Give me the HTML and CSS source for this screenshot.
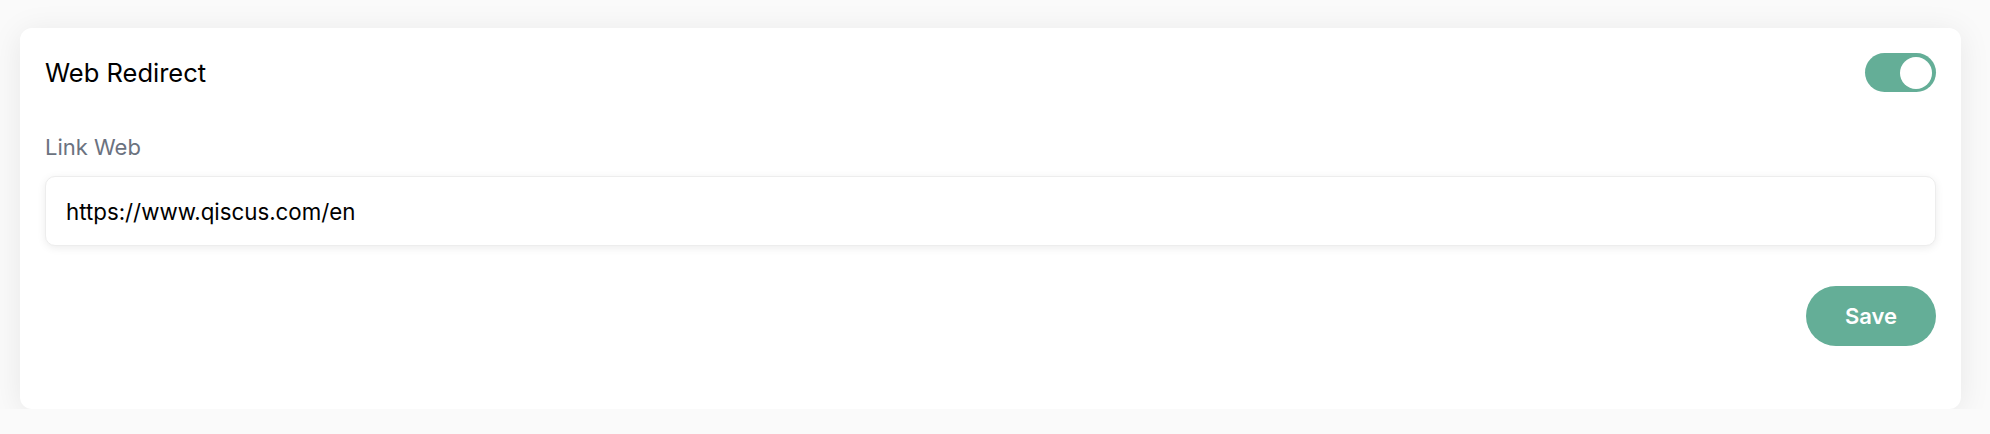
FILE: index.html
```html
<!DOCTYPE html>
<html lang="en">
<head>
  <meta charset="UTF-8">
  <meta name="viewport" content="width=device-width, initial-scale=1.0">
  <title>Web Redirect</title>
  <link rel="stylesheet" href="styles.css">
</head>
<body>
  <div class="card">
    <!-- Header with toggle -->
    <div class="card-header">
      <h2 class="card-title">Web Redirect</h2>
      <label class="switch">
        <input type="checkbox" checked>
        <span class="slider"></span>
      </label>
    </div>

    <!-- Link field -->
    <label class="field-label" for="linkWeb">Link Web</label>
    <input class="field-input" type="text" id="linkWeb" value="https://www.qiscus.com/en">

    <div class="actions">
      <button type="button" class="save-btn">Save</button>
    </div>
  </div>
</body>
</html>
```

FILE: styles.css
```css
body {
  margin: 0;
  padding: 28px 29px 0 20px;
  font-family: Inter, "Noto Sans", sans-serif;
  background-color: #fafafa;
  color: #000;
}

.card {
  background: #fff;
  border-radius: 12px;
  padding: 25px 25px 63px 25px;
  height: 381px;
  box-sizing: border-box;
  box-shadow: 0 4px 32px rgba(0, 0, 0, 0.08);
}

.card-header {
  display: flex;
  justify-content: space-between;
  align-items: center;
  height: 39px;
}

.card-title {
  margin: 0;
  font-size: 25.5px;
  font-weight: 400;
}

/* toggle */
.switch {
  position: relative;
  width: 71px;
  height: 39px;
  display: inline-block;
}

.switch input {
  opacity: 0;
  width: 0;
  height: 0;
}

.slider {
  position: absolute;
  inset: 0;
  background-color: #64ae97;
  border-radius: 20px;
  cursor: pointer;
}

.slider::before {
  content: "";
  position: absolute;
  width: 32px;
  height: 32px;
  left: 4px;
  top: 3.5px;
  background: #fff;
  border-radius: 50%;
}

.switch input:checked + .slider::before {
  left: 35px;
}

.field-label {
  display: block;
  margin-top: 41px;
  font-size: 22px;
  color: #6b7280;
  line-height: 28px;
}

.field-input {
  display: block;
  box-sizing: border-box;
  width: 100%;
  height: 70px;
  margin-top: 15px;
  padding: 0 20px;
  border: 1px solid #ededed;
  border-radius: 10px;
  font-family: Inter, "Noto Sans", sans-serif;
  font-size: 22.3px;
  color: #000;
  box-shadow: 0 2px 8px rgba(0, 0, 0, 0.08);
  outline: none;
}

.actions {
  display: flex;
  justify-content: flex-end;
  margin-top: 40px;
}

.save-btn {
  width: 130px;
  height: 60px;
  border: none;
  border-radius: 30px;
  background-color: #64ae97;
  color: #fff;
  font-family: Inter, "Noto Sans", sans-serif;
  font-size: 22px;
  font-weight: 600;
  cursor: pointer;
}
```
